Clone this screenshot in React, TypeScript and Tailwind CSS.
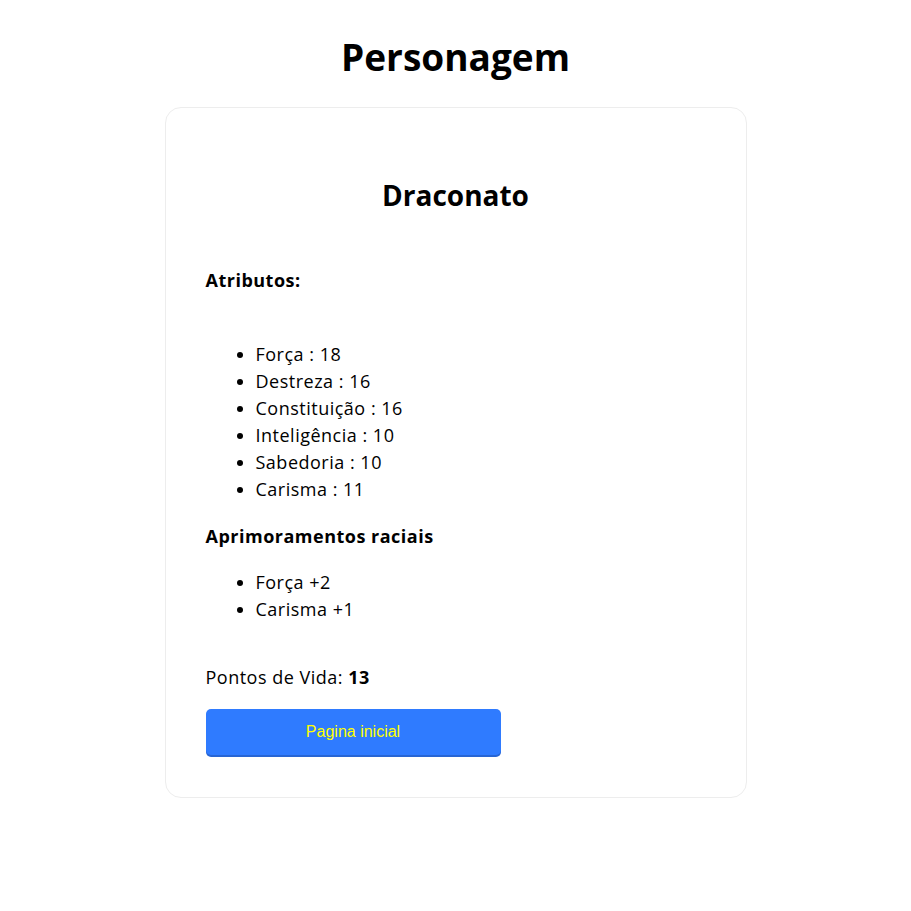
const atributos = [
  { nome: 'Força', valor: 18 },
  { nome: 'Destreza', valor: 16 },
  { nome: 'Constituição', valor: 16 },
  { nome: 'Inteligência', valor: 10 },
  { nome: 'Sabedoria', valor: 10 },
  { nome: 'Carisma', valor: 11 },
];

const aprimoramentos = ['Força +2', 'Carisma +1'];

export default function App() {
  return (
    <div className="min-h-screen bg-white text-black font-['Open_Sans','Noto_Sans',sans-serif] pt-[34px] pb-10">
      <h1 className="text-center text-[37px] leading-[46px] font-bold">Personagem</h1>

      {/* Card */}
      <div className="mx-auto mt-[27px] w-[582px] rounded-2xl border border-[#ededed] px-10 pt-[70px] pb-[42px]">
        <h2 className="text-center text-[28px] leading-[34px] font-bold">Draconato</h2>

        <h3 className="mt-[55px] text-[18px] leading-[27px] font-bold tracking-[0.5px]">Atributos:</h3>
        <ul className="mt-[47px] list-disc pl-[50px] text-[18px] leading-[27px] tracking-[0.5px]">
          {atributos.map((a) => (
            <li key={a.nome}>
              {a.nome} : {a.valor}
            </li>
          ))}
        </ul>

        <h3 className="mt-[20px] text-[18px] leading-[27px] font-bold tracking-[0.5px]">Aprimoramentos raciais</h3>
        <ul className="mt-[19px] list-disc pl-[50px] text-[18px] leading-[27px] tracking-[0.5px]">
          {aprimoramentos.map((a) => (
            <li key={a}>{a}</li>
          ))}
        </ul>

        <p className="mt-[41px] text-[18px] leading-[27px] tracking-[0.5px]">
          Pontos de Vida: <b>13</b>
        </p>

        <button
          type="button"
          className="mt-[18px] block h-[46px] w-[295px] rounded-[5px] bg-[#2f7bff] text-[16px] text-[#ffff00] font-['Liberation_Sans',Arial,sans-serif] shadow-[0_2px_0_#2765d4]"
        >
          Pagina inicial
        </button>
      </div>
    </div>
  );
}
